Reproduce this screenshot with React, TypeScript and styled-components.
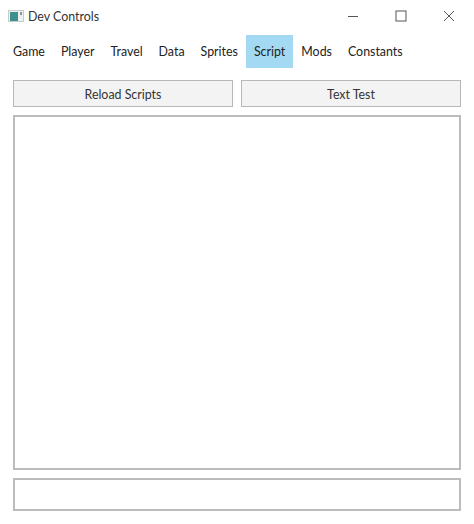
import React from "react";
import styled, { createGlobalStyle } from "styled-components";

const GlobalStyle = createGlobalStyle`
	html, body {
		margin: 0;
		padding: 0;
		background: #ffffff;
	}
`;

const Window = styled.div`
	width: 474px;
	height: 524px;
	box-sizing: border-box;
	padding: 0 13px 13px 13px;
	display: flex;
	flex-direction: column;
	background: #ffffff;
	color: #222222;
	font-family: "Lato", "Open Sans", sans-serif;
	overflow: hidden;
`;

const TitleBar = styled.div`
	height: 35px;
	box-sizing: border-box;
	padding-bottom: 4px;
	margin: 0 0 0 -5px;
	display: flex;
	align-items: center;
`;

const AppIcon = styled.svg`
	width: 16px;
	height: 12px;
	margin-right: 4px;
	flex: none;
`;

const Title = styled.span`
	flex: 1;
	padding-top: 1px;
	font-size: 12.4px;
	color: #333333;
`;

const WindowButton = styled.button`
	width: 46px;
	height: 30px;
	padding: 0;
	border: none;
	background: none;
	display: flex;
	align-items: center;
	justify-content: center;
	color: #555555;
`;

const WindowButtons = styled.div`
	display: flex;
	margin: 0 -11px 0 0;
	gap: 2px;
`;

const Tabs = styled.nav`
	height: 33px;
	display: flex;
	margin-left: -8px;
`;

const Tab = styled.div<{ $active?: boolean }>`
	padding: 0 8px;
	display: flex;
	align-items: center;
	font-size: 12.4px;
	background: ${(p) => (p.$active ? "#a3d9f2" : "transparent")};
`;

const ButtonRow = styled.div`
	margin-top: 12px;
	display: grid;
	grid-template-columns: 220px 220px;
	gap: 8px;
`;

const ActionButton = styled.button`
	height: 27px;
	padding: 2px 0 0;
	box-sizing: border-box;
	border: 1px solid #b8b8b8;
	background: #f3f3f3;
	color: #333333;
	font-family: inherit;
	font-size: 12.4px;
`;

const OutputArea = styled.div`
	flex: 1;
	margin-top: 8px;
	box-sizing: border-box;
	border: 2px solid #bcbcbc;
	background: #ffffff;
`;

const CommandInput = styled.input`
	width: 100%;
	height: 33px;
	margin-top: 8px;
	box-sizing: border-box;
	border: 2px solid #bcbcbc;
	background: #ffffff;
	outline: none;
`;

const tabs = ["Game", "Player", "Travel", "Data", "Sprites", "Script", "Mods", "Constants"];

export default function App() {
	return (
		<>
			<GlobalStyle />
			<Window>
				<TitleBar>
					<AppIcon viewBox="0 0 16 12">
						<rect x="0.5" y="0.5" width="15" height="11" fill="#eef1f1" stroke="#c4cccc" />
						<rect x="2" y="2" width="8" height="9" fill="#3f8f8a" />
						<rect x="12" y="2" width="2" height="3" fill="#8a9a9a" />
					</AppIcon>
					<Title>Dev Controls</Title>
					<WindowButtons>
						<WindowButton aria-label="Minimize">
							<svg width="12" height="12" viewBox="0 0 12 12">
								<path d="M1 6.5H11" stroke="currentColor" fill="none" />
							</svg>
						</WindowButton>
						<WindowButton aria-label="Maximize">
							<svg width="12" height="12" viewBox="0 0 12 12">
								<rect x="1" y="1" width="10" height="10" stroke="currentColor" fill="none" />
							</svg>
						</WindowButton>
						<WindowButton aria-label="Close">
							<svg width="12" height="12" viewBox="0 0 12 12">
								<path d="M1 1L11 11M11 1L1 11" stroke="currentColor" fill="none" />
							</svg>
						</WindowButton>
					</WindowButtons>
				</TitleBar>
				<Tabs>
					{tabs.map((t) => (
						<Tab key={t} $active={t === "Script"}>
							{t}
						</Tab>
					))}
				</Tabs>
				<ButtonRow>
					<ActionButton>Reload Scripts</ActionButton>
					<ActionButton>Text Test</ActionButton>
				</ButtonRow>
				<OutputArea />
				<CommandInput />
			</Window>
		</>
	);
}
